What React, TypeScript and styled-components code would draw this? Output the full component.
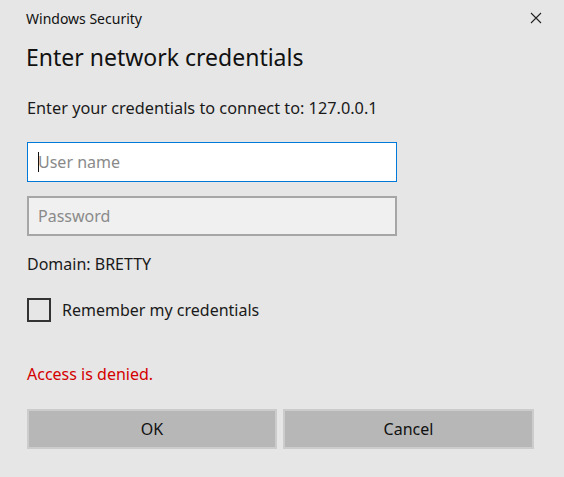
import styled, { createGlobalStyle } from 'styled-components';

const Global = createGlobalStyle`
  html, body {
    margin: 0;
    padding: 0;
    background: #e6e6e6;
  }
  body {
    font-family: "Noto Sans", "Open Sans", sans-serif;
    color: #1a1a1a;
  }
`;

const Dialog = styled.div`
  width: 564px;
  height: 477px;
  background: #e6e6e6;
  display: flex;
  flex-direction: column;
  box-sizing: border-box;
`;

const TitleBar = styled.div`
  height: 36px;
  display: flex;
  align-items: center;
  justify-content: space-between;
  padding-left: 26px;
  padding-right: 14px;
  font-size: 14px;
  color: #111;
`;

const CloseBtn = styled.div`
  width: 28px;
  height: 28px;
  display: flex;
  align-items: center;
  justify-content: center;
`;

const Body = styled.div`
  padding: 0 30px 0 27px;
  display: flex;
  flex-direction: column;
`;

const Heading = styled.h1`
  margin: 6px 0 0 -1px;
  font-size: 23px;
  font-weight: 400;
  line-height: 30px;
  color: #111;
`;

const Text = styled.p<{ $top: number; $size?: number; $color?: string }>`
  margin: ${(p) => p.$top}px 0 0;
  font-size: ${(p) => p.$size || 16}px;
  line-height: 20px;
  color: ${(p) => p.$color || '#1a1a1a'};
`;

const Field = styled.div<{ $focused?: boolean }>`
  position: relative;
  width: 370px;
  height: 40px;
  box-sizing: border-box;
  margin-top: ${(p) => (p.$focused ? 24 : 14)}px;
  border: ${(p) => (p.$focused ? '1px solid #0078d7' : '2px solid #a6a6a6')};
  background: ${(p) => (p.$focused ? '#ffffff' : '#f0f0f0')};
  display: flex;
  align-items: center;
  padding-left: ${(p) => (p.$focused ? 10 : 9)}px;
  font-size: 16px;
  color: #8a8a8a;
`;

const Caret = styled.span`
  position: absolute;
  left: 10px;
  top: 9px;
  width: 1px;
  height: 20px;
  background: #111;
`;

const CheckRow = styled.label`
  margin-top: 24px;
  display: flex;
  align-items: center;
  gap: 11px;
  font-size: 16px;
  color: #1a1a1a;
`;

const Box = styled.span`
  width: 24px;
  height: 24px;
  box-sizing: border-box;
  border: 2px solid #333;
`;

const Buttons = styled.div`
  margin-top: 25px;
  display: grid;
  grid-template-columns: 250px 251px;
  gap: 6px;
`;

const Button = styled.button`
  height: 40px;
  background: #b7b7b7;
  border: 2px solid #cccccc;
  font-family: "Noto Sans", "Open Sans", sans-serif;
  font-size: 16px;
  color: #111;
  padding: 0;
`;

export default function App() {
  return (
    <>
      <Global />
      <Dialog>
        <TitleBar>
          <span>Windows Security</span>
          <CloseBtn>
            <svg width="12" height="12" viewBox="0 0 12 12">
              <path d="M1 1 L11 11 M11 1 L1 11" stroke="#222" strokeWidth="1.1" />
            </svg>
          </CloseBtn>
        </TitleBar>
        <Body>
          <Heading>Enter network credentials</Heading>
          <Text $top={26} $size={16.3}>Enter your credentials to connect to: 127.0.0.1</Text>
          <Field $focused>
            <Caret />
            User name
          </Field>
          <Field>Password</Field>
          <Text $top={18}>Domain: BRETTY</Text>
          <CheckRow>
            <Box />
            Remember my credentials
          </CheckRow>
          <Text $top={42} $color="#d40000">Access is denied.</Text>
          <Buttons>
            <Button>OK</Button>
            <Button>Cancel</Button>
          </Buttons>
        </Body>
      </Dialog>
    </>
  );
}
